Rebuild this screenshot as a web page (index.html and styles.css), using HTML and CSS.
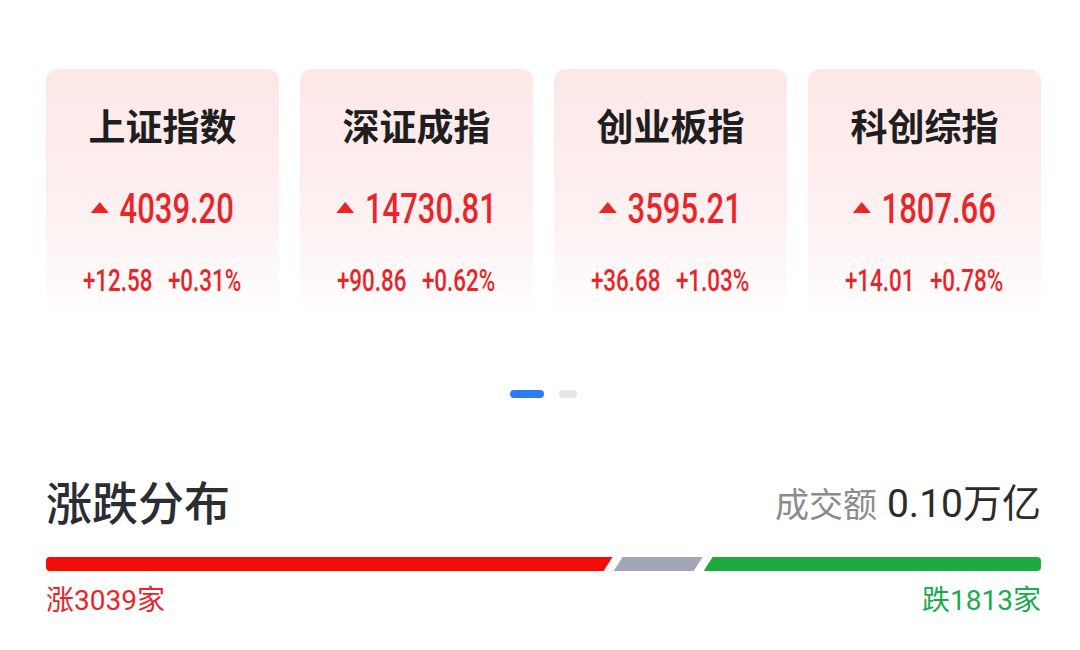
FILE: index.html
```html
<!DOCTYPE html>
<html lang="zh-CN">
<head>
<meta charset="utf-8">
<title>行情</title>
<link rel="stylesheet" href="styles.css">
</head>
<body>
<div class="page">
  <div class="cards">
    <div class="card">
      <div class="card-title">上证指数</div>
      <div class="price"><span class="price-row"><svg class="tri" viewBox="0 0 25 11"><polygon points="12.5,0 25,11 0,11"/></svg><span class="price-num">4039.20</span></span></div>
      <div class="change"><span class="change-row"><span>+12.58</span><span>+0.31%</span></span></div>
    </div>
    <div class="card">
      <div class="card-title">深证成指</div>
      <div class="price"><span class="price-row"><svg class="tri" viewBox="0 0 25 11"><polygon points="12.5,0 25,11 0,11"/></svg><span class="price-num">14730.81</span></span></div>
      <div class="change"><span class="change-row"><span>+90.86</span><span>+0.62%</span></span></div>
    </div>
    <div class="card">
      <div class="card-title">创业板指</div>
      <div class="price"><span class="price-row"><svg class="tri" viewBox="0 0 25 11"><polygon points="12.5,0 25,11 0,11"/></svg><span class="price-num">3595.21</span></span></div>
      <div class="change"><span class="change-row"><span>+36.68</span><span>+1.03%</span></span></div>
    </div>
    <div class="card">
      <div class="card-title">科创综指</div>
      <div class="price"><span class="price-row"><svg class="tri" viewBox="0 0 25 11"><polygon points="12.5,0 25,11 0,11"/></svg><span class="price-num">1807.66</span></span></div>
      <div class="change"><span class="change-row"><span>+14.01</span><span>+0.78%</span></span></div>
    </div>
  </div>

  <div class="dots">
    <span class="dot dot-active"></span>
    <span class="dot"></span>
  </div>

  <div class="dist-head">
    <div class="dist-title">涨跌分布</div>
    <div class="turnover"><span class="turnover-label">成交额</span><span class="turnover-value">0.10万亿</span></div>
  </div>

  <div class="bar">
    <div class="seg seg-up" style="flex-grow:566"></div>
    <div class="seg seg-flat" style="flex-grow:89"></div>
    <div class="seg seg-down" style="flex-grow:337"></div>
  </div>

  <div class="bar-labels">
    <span class="lbl-up">涨3039家</span>
    <span class="lbl-down">跌1813家</span>
  </div>
</div>
</body>
</html>
```

FILE: styles.css
```css
* { box-sizing: border-box; }

html, body {
  margin: 0;
  padding: 0;
  background: #ffffff;
}

body {
  font-family: "Noto Sans CJK SC", "Noto Sans", sans-serif;
  color: #222222;
}

.page {
  width: 1080px;
  padding: 69px 39px 0 46px;
}

.cards {
  display: grid;
  grid-template-columns: repeat(4, 233px);
  column-gap: 21px;
}

.card {
  height: 251px;
  border-radius: 12px;
  background: linear-gradient(180deg, #fde7e7 0%, #fdf0f0 55%, #ffffff 100%);
  padding-top: 36px;
  text-align: center;
}

.card-title {
  font-size: 37px;
  line-height: 40px;
  font-weight: 700;
  color: #1e1e1e;
}

.price {
  margin-top: 39px;
  height: 44px;
  line-height: 44px;
}

.price-row {
  display: inline-flex;
  align-items: center;
  gap: 15px;
  transform: scaleX(0.72);
  color: #e8262a;
}

.tri {
  width: 25px;
  height: 11px;
  fill: #e8262a;
}

.price-num {
  font-family: Roboto, "Liberation Sans", sans-serif;
  font-size: 43px;
  font-weight: 500;
  line-height: 44px;
}

.change {
  margin-top: 36px;
  height: 32px;
  line-height: 32px;
}

.change-row {
  display: inline-flex;
  gap: 22px;
  transform: scaleX(0.7);
  font-family: Roboto, "Liberation Sans", sans-serif;
  font-size: 32px;
  font-weight: 500;
  color: #e8262a;
}

.dots {
  margin-top: 70px;
  display: flex;
  justify-content: center;
  gap: 15px;
  height: 8px;
}

.dot {
  width: 18px;
  height: 8px;
  border-radius: 4px;
  background: #e6e6e6;
}

.dot-active {
  width: 34px;
  background: #2f7bf5;
}

.dist-head {
  margin-top: 76px;
  display: flex;
  justify-content: space-between;
  align-items: center;
  height: 52px;
}

.dist-title {
  font-size: 46px;
  font-weight: 500;
  color: #2a2d33;
  line-height: 52px;
}

.turnover {
  display: flex;
  align-items: baseline;
  gap: 10px;
}

.turnover-label {
  font-size: 34px;
  color: #8c8c8c;
}

.turnover-value {
  font-family: Roboto, "Noto Sans CJK SC", sans-serif;
  font-size: 39px;
  color: #2b2b2b;
}

.bar {
  margin-top: 31px;
  display: flex;
  gap: 1px;
  height: 14px;
}

.seg {
  height: 14px;
  flex-basis: 0;
}

.seg-up {
  background: #f40c0c;
  border-radius: 4px 0 0 4px;
  clip-path: polygon(0 0, 100% 0, calc(100% - 9px) 100%, 0 100%);
}

.seg-flat {
  background: #a2a7b8;
  clip-path: polygon(9px 0, 100% 0, calc(100% - 9px) 100%, 0 100%);
}

.seg-down {
  background: #1cab3c;
  border-radius: 0 4px 4px 0;
  clip-path: polygon(9px 0, 100% 0, 100% 100%, 0 100%);
}

.bar-labels {
  margin-top: 13px;
  display: flex;
  justify-content: space-between;
  font-family: Roboto, "Noto Sans CJK SC", sans-serif;
  font-size: 28px;
  line-height: 34px;
}

.lbl-up { color: #e8262a; }
.lbl-down { color: #19ab4d; }
```
